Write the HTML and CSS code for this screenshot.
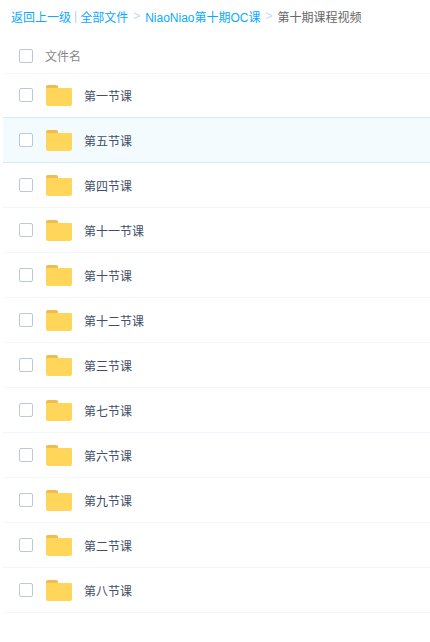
FILE: index.html
```html
<!DOCTYPE html>
<html lang="zh-CN">
<head>
  <meta charset="UTF-8">
  <meta name="viewport" content="width=device-width, initial-scale=1.0">
  <title>第十期课程视频</title>
  <link rel="stylesheet" href="styles.css">
</head>
<body>

<div class="crumbs">
  <a href="#">返回上一级</a>
  <span class="pipe">|</span>
  <a href="#">全部文件</a>
  <span class="sep">&gt;</span>
  <a href="#">NiaoNiao第十期OC课</a>
  <span class="sep">&gt;</span>
  <span class="current">第十期课程视频</span>
</div>

<div class="list">
  <div class="list-head">
    <span class="check"></span>
    <span class="head-name">文件名</span>
  </div>

  <div class="row">
    <span class="check"></span>
    <svg class="folder" viewBox="0 0 26 21"><path d="M0 2a2 2 0 0 1 2-2h8a2 2 0 0 1 2 2v2H0z" fill="#eebc4f"/><path d="M1 3h24a1 1 0 0 1 1 1v15a2 2 0 0 1-2 2H2a2 2 0 0 1-2-2V4a1 1 0 0 1 1-1z" fill="#ffd659"/></svg>
    <span class="name">第一节课</span>
  </div>
  <div class="row active">
    <span class="check"></span>
    <svg class="folder" viewBox="0 0 26 21"><path d="M0 2a2 2 0 0 1 2-2h8a2 2 0 0 1 2 2v2H0z" fill="#eebc4f"/><path d="M1 3h24a1 1 0 0 1 1 1v15a2 2 0 0 1-2 2H2a2 2 0 0 1-2-2V4a1 1 0 0 1 1-1z" fill="#ffd659"/></svg>
    <span class="name">第五节课</span>
  </div>
  <div class="row">
    <span class="check"></span>
    <svg class="folder" viewBox="0 0 26 21"><path d="M0 2a2 2 0 0 1 2-2h8a2 2 0 0 1 2 2v2H0z" fill="#eebc4f"/><path d="M1 3h24a1 1 0 0 1 1 1v15a2 2 0 0 1-2 2H2a2 2 0 0 1-2-2V4a1 1 0 0 1 1-1z" fill="#ffd659"/></svg>
    <span class="name">第四节课</span>
  </div>
  <div class="row">
    <span class="check"></span>
    <svg class="folder" viewBox="0 0 26 21"><path d="M0 2a2 2 0 0 1 2-2h8a2 2 0 0 1 2 2v2H0z" fill="#eebc4f"/><path d="M1 3h24a1 1 0 0 1 1 1v15a2 2 0 0 1-2 2H2a2 2 0 0 1-2-2V4a1 1 0 0 1 1-1z" fill="#ffd659"/></svg>
    <span class="name">第十一节课</span>
  </div>
  <div class="row">
    <span class="check"></span>
    <svg class="folder" viewBox="0 0 26 21"><path d="M0 2a2 2 0 0 1 2-2h8a2 2 0 0 1 2 2v2H0z" fill="#eebc4f"/><path d="M1 3h24a1 1 0 0 1 1 1v15a2 2 0 0 1-2 2H2a2 2 0 0 1-2-2V4a1 1 0 0 1 1-1z" fill="#ffd659"/></svg>
    <span class="name">第十节课</span>
  </div>
  <div class="row">
    <span class="check"></span>
    <svg class="folder" viewBox="0 0 26 21"><path d="M0 2a2 2 0 0 1 2-2h8a2 2 0 0 1 2 2v2H0z" fill="#eebc4f"/><path d="M1 3h24a1 1 0 0 1 1 1v15a2 2 0 0 1-2 2H2a2 2 0 0 1-2-2V4a1 1 0 0 1 1-1z" fill="#ffd659"/></svg>
    <span class="name">第十二节课</span>
  </div>
  <div class="row">
    <span class="check"></span>
    <svg class="folder" viewBox="0 0 26 21"><path d="M0 2a2 2 0 0 1 2-2h8a2 2 0 0 1 2 2v2H0z" fill="#eebc4f"/><path d="M1 3h24a1 1 0 0 1 1 1v15a2 2 0 0 1-2 2H2a2 2 0 0 1-2-2V4a1 1 0 0 1 1-1z" fill="#ffd659"/></svg>
    <span class="name">第三节课</span>
  </div>
  <div class="row">
    <span class="check"></span>
    <svg class="folder" viewBox="0 0 26 21"><path d="M0 2a2 2 0 0 1 2-2h8a2 2 0 0 1 2 2v2H0z" fill="#eebc4f"/><path d="M1 3h24a1 1 0 0 1 1 1v15a2 2 0 0 1-2 2H2a2 2 0 0 1-2-2V4a1 1 0 0 1 1-1z" fill="#ffd659"/></svg>
    <span class="name">第七节课</span>
  </div>
  <div class="row">
    <span class="check"></span>
    <svg class="folder" viewBox="0 0 26 21"><path d="M0 2a2 2 0 0 1 2-2h8a2 2 0 0 1 2 2v2H0z" fill="#eebc4f"/><path d="M1 3h24a1 1 0 0 1 1 1v15a2 2 0 0 1-2 2H2a2 2 0 0 1-2-2V4a1 1 0 0 1 1-1z" fill="#ffd659"/></svg>
    <span class="name">第六节课</span>
  </div>
  <div class="row">
    <span class="check"></span>
    <svg class="folder" viewBox="0 0 26 21"><path d="M0 2a2 2 0 0 1 2-2h8a2 2 0 0 1 2 2v2H0z" fill="#eebc4f"/><path d="M1 3h24a1 1 0 0 1 1 1v15a2 2 0 0 1-2 2H2a2 2 0 0 1-2-2V4a1 1 0 0 1 1-1z" fill="#ffd659"/></svg>
    <span class="name">第九节课</span>
  </div>
  <div class="row">
    <span class="check"></span>
    <svg class="folder" viewBox="0 0 26 21"><path d="M0 2a2 2 0 0 1 2-2h8a2 2 0 0 1 2 2v2H0z" fill="#eebc4f"/><path d="M1 3h24a1 1 0 0 1 1 1v15a2 2 0 0 1-2 2H2a2 2 0 0 1-2-2V4a1 1 0 0 1 1-1z" fill="#ffd659"/></svg>
    <span class="name">第二节课</span>
  </div>
  <div class="row">
    <span class="check"></span>
    <svg class="folder" viewBox="0 0 26 21"><path d="M0 2a2 2 0 0 1 2-2h8a2 2 0 0 1 2 2v2H0z" fill="#eebc4f"/><path d="M1 3h24a1 1 0 0 1 1 1v15a2 2 0 0 1-2 2H2a2 2 0 0 1-2-2V4a1 1 0 0 1 1-1z" fill="#ffd659"/></svg>
    <span class="name">第八节课</span>
  </div>
</div>

</body>
</html>
```

FILE: styles.css
```css
body {
  font-family: "Liberation Sans", "Noto Sans CJK SC", sans-serif;
  font-size: 12px;
  margin: 0;
  padding: 0;
  background-color: #fff;
  color: #424e67;
}
.crumbs {
  display: flex;
  align-items: center;
  height: 32px;
  padding-left: 11px;
  color: #666;
}
.crumbs a {
  color: #09aaff;
  text-decoration: none;
}
.pipe {
  margin: 0 3px 0 3px;
  color: #b5cfe6;
}
.sep {
  margin: 0 5px;
  color: #c5d8f3;
}
.current {
  color: #666;
}
.list {
  margin-left: 3px;
}
.list-head {
  display: flex;
  align-items: center;
  height: 34px;
  padding: 7px 0 0 16px;
  margin-bottom: -1px;
  border-bottom: 1px solid #f2f6fd;
}
.head-name {
  margin-left: 12px;
  margin-top: -2px;
  color: #888;
}
.row {
  display: flex;
  align-items: center;
  height: 44px;
  padding-left: 16px;
  border-bottom: 1px solid #f2f6fd;
}
.row.active {
  margin-top: -1px;
  border-top: 1px solid #d7ecfb;
  border-bottom: 1px solid #d0e9fb;
  background-color: #f4fbff;
}
.check {
  flex: none;
  width: 14px;
  height: 14px;
  border: 1px solid #bcc8d8;
  border-radius: 2px;
  background-color: #fff;
  box-sizing: border-box;
}
.folder {
  flex: none;
  width: 26px;
  height: 21px;
  margin-left: 13px;
}
.name {
  margin-left: 12px;
}
```
